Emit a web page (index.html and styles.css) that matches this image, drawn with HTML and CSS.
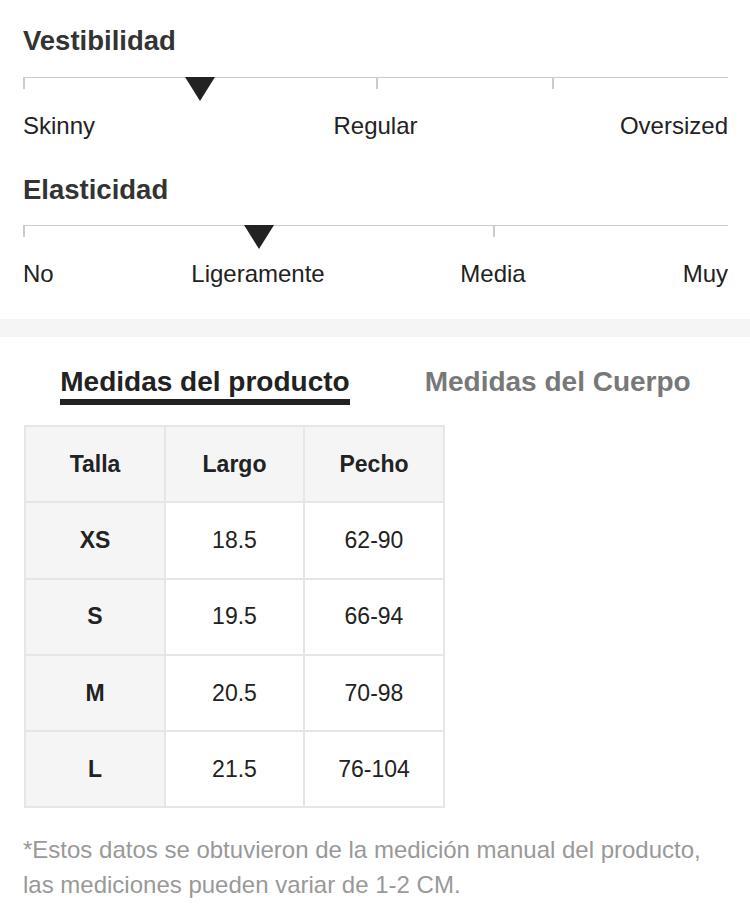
FILE: index.html
```html
<!DOCTYPE html>
<html lang="es">
<head>
<meta charset="utf-8">
<title>Medidas</title>
<link rel="stylesheet" href="styles.css">
</head>
<body>
<section class="fit">
  <div class="attr">
    <h2 class="attr-title">Vestibilidad</h2>
    <div class="track track-4">
      <span class="seg"></span><span class="seg"></span><span class="seg"></span><span class="seg"></span>
      <span class="marker marker-4-1"></span>
    </div>
    <div class="labels labels-4">
      <span class="lab lab-start">Skinny</span>
      <span class="lab lab-mid-2">Regular</span>
      <span class="lab lab-end-4">Oversized</span>
    </div>
  </div>
  <div class="attr">
    <h2 class="attr-title">Elasticidad</h2>
    <div class="track track-3">
      <span class="seg"></span><span class="seg"></span><span class="seg"></span>
      <span class="marker marker-3-1"></span>
    </div>
    <div class="labels labels-6">
      <span class="lab lab-start">No</span>
      <span class="lab lab-c23">Ligeramente</span>
      <span class="lab lab-c45">Media</span>
      <span class="lab lab-end-6">Muy</span>
    </div>
  </div>
</section>
<div class="band"></div>
<section class="sizes">
  <div class="tabs">
    <span class="tab active">Medidas del producto</span>
    <span class="tab">Medidas del Cuerpo</span>
  </div>
  <table class="size-table">
    <thead>
      <tr><th>Talla</th><th>Largo</th><th>Pecho</th></tr>
    </thead>
    <tbody>
      <tr><th>XS</th><td>18.5</td><td>62-90</td></tr>
      <tr><th>S</th><td>19.5</td><td>66-94</td></tr>
      <tr><th>M</th><td>20.5</td><td>70-98</td></tr>
      <tr><th>L</th><td>21.5</td><td>76-104</td></tr>
    </tbody>
  </table>
  <p class="note">*Estos datos se obtuvieron de la medición manual del producto, las mediciones pueden variar de 1-2 CM.</p>
</section>
</body>
</html>
```

FILE: styles.css
```css
* { box-sizing: border-box; }

html, body {
  margin: 0;
  padding: 0;
  background: #fff;
}

body {
  width: 750px;
  font-family: "Liberation Sans", Arial, Helvetica, sans-serif;
  color: #222;
}

.fit {
  padding: 24.5px 22px 31px 23px;
}

.attr + .attr {
  margin-top: 34.5px;
}

.attr-title {
  margin: 0;
  font-size: 27.5px;
  line-height: 32px;
  font-weight: bold;
  color: #333;
}

.track {
  position: relative;
  display: grid;
  height: 12px;
  margin-top: 20px;
  border-top: 1px solid #cccccc;
}

.attr + .attr .track { margin-top: 19px; }

.track-4 { grid-template-columns: repeat(4, 1fr); }
.track-3 { grid-template-columns: repeat(3, 1fr); }

.seg {
  border-left: 2px solid #cccccc;
}

.seg:last-of-type {
  border-right: 2px solid #cccccc;
}

.marker {
  position: absolute;
  top: -1px;
  width: 0;
  height: 0;
  border-left: 15px solid transparent;
  border-right: 15px solid transparent;
  border-top: 24px solid #222;
}

.marker-4-1 { left: calc(25% - 14px); }
.marker-3-1 { left: calc(33.333% - 14px); }

.labels {
  display: grid;
  margin-top: 23px;
  font-size: 24px;
  line-height: 28px;
  color: #222;
  white-space: nowrap;
}

.labels-4 { grid-template-columns: repeat(4, 1fr); }
.labels-6 { grid-template-columns: repeat(6, 1fr); }

.lab-start { grid-column: 1; justify-self: start; }
.lab-mid-2 { grid-column: 2 / 4; justify-self: center; }
.lab-end-4 { grid-column: 4; justify-self: end; }
.lab-c23 { grid-column: 2 / 4; justify-self: center; }
.lab-c45 { grid-column: 4 / 6; justify-self: center; }
.lab-end-6 { grid-column: 6; justify-self: end; }

.band {
  height: 18px;
  background: #f5f5f5;
}

.sizes {
  padding: 0 22px 0 23px;
}

.tabs {
  display: flex;
  justify-content: center;
  gap: 75px;
  margin-top: 29px;
}

.tab {
  font-size: 28px;
  line-height: 32px;
  font-weight: bold;
  color: #787878;
  padding-bottom: 1px;
  border-bottom: 6px solid transparent;
  white-space: nowrap;
}

.tab.active {
  color: #222;
  border-bottom-color: #222;
}

.size-table {
  margin: 20px 0 0 1px;
  border-collapse: separate;
  border-spacing: 2px;
  background: #e6e6e6;
  table-layout: fixed;
}

.size-table th,
.size-table td {
  width: 138px;
  height: 74.3px;
  padding: 0;
  text-align: center;
  vertical-align: middle;
  font-size: 23px;
  color: #222;
  background: #fff;
}

.size-table tr > :nth-child(2) { width: 137px; }

.size-table th {
  font-weight: bold;
  background: #f5f5f5;
}

.note {
  margin: 23.5px 0 0;
  font-size: 24px;
  line-height: 35px;
  color: #999;
}
```
